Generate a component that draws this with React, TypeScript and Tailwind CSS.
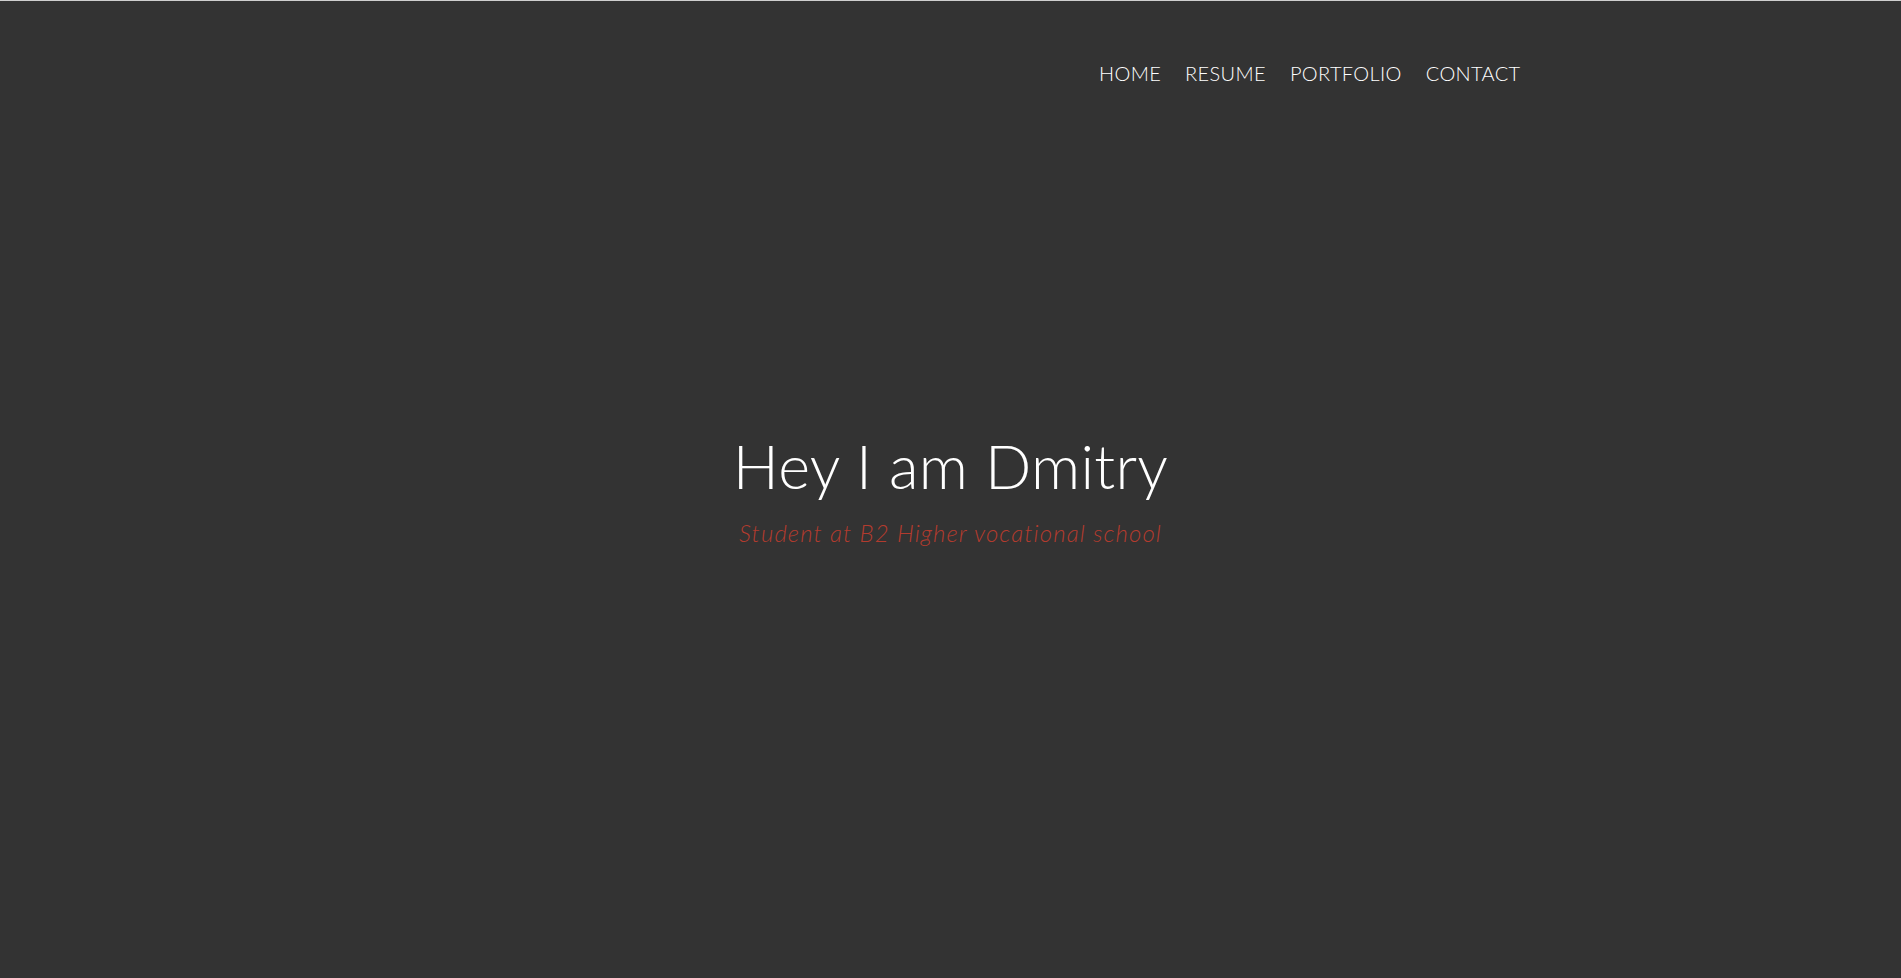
import React from 'react';

const links = ['HOME', 'RESUME', 'PORTFOLIO', 'CONTACT'];

export default function App() {
  return (
    <div className="min-h-screen h-[978px] w-full bg-[#333333] border-t border-[#cfcfcf] flex flex-col font-['Lato','Open_Sans',sans-serif]">
      {/* top nav */}
      <header className="w-[1170px] mx-auto px-[15px] pt-[60px]">
        <nav className="flex justify-end gap-[24px]">
          {links.map((l) => (
            <a key={l} href="#" className="text-[20px] font-light leading-[24px] text-white tracking-[0.35px]">
              {l}
            </a>
          ))}
        </nav>
      </header>

      {/* hero */}
      <main className="flex-1 flex flex-col items-center pt-[346px]">
        <h1 className="text-[61px] font-light leading-[70px] text-white tracking-[0.3px]">Hey I am Dmitry</h1>
        <p className="mt-[17px] text-[24px] font-light italic leading-[30px] text-[#b23b2e] tracking-[1.1px]">
          Student at B2 Higher vocational school
        </p>
      </main>
    </div>
  );
}
